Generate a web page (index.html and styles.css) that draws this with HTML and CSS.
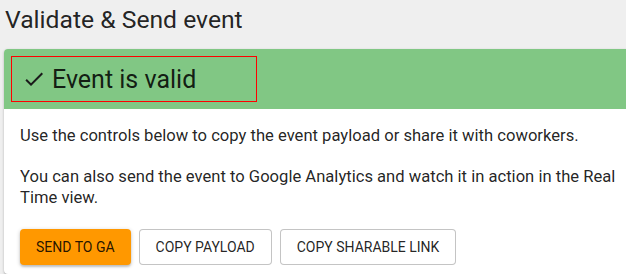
FILE: index.html
```html
<!DOCTYPE html>
<html>
  <head>
    <title>Validate &amp; Send event</title>
    <link rel="stylesheet" href="styles.css">
  </head>
  <body>
    <h1 class="page-title">Validate &amp; Send event</h1>

    <div class="card">
      <div class="card-status">
        <div class="status-title">
          <svg class="status-icon" viewBox="0 0 24 24" width="24" height="24">
            <path d="M9 16.17L4.83 12l-1.42 1.41L9 19 21 7l-1.41-1.41z"></path>
          </svg>
          <span>Event is valid</span>
        </div>
      </div>
      <div class="card-body">
        <p>Use the controls below to copy the event payload or share it with coworkers.</p>
        <p>You can also send the event to Google Analytics and watch it in action in the Real Time view.</p>
        <div class="actions">
          <button class="btn btn-primary">Send to GA</button>
          <button class="btn btn-outlined">Copy payload</button>
          <button class="btn btn-outlined">Copy sharable link</button>
        </div>
      </div>
    </div>
  </body>
</html>
```

FILE: styles.css
```css
html, body {
  overflow: hidden;
}
body {
  margin: 0;
  background-color: #efefef;
  font-family: Roboto, "Liberation Sans", sans-serif;
  color: rgba(0, 0, 0, 0.87);
}
.page-title {
  margin: 0;
  padding: 7px 5px 16px;
  font-size: 24.7px;
  font-weight: 400;
  line-height: 26px;
}
.card {
  margin: 0 -20px 0 4px;
  background-color: #fff;
  border-radius: 4px;
  box-shadow: 0 1px 3px rgba(0, 0, 0, 0.2), 0 1px 1px rgba(0, 0, 0, 0.14);
  overflow: hidden;
}
.card-status {
  padding: 7px;
  background-color: #81c784;
}
.status-title {
  display: flex;
  align-items: center;
  width: 234px;
  height: 44px;
  padding-left: 10px;
  border: 1px solid #ff0000;
  font-size: 25px;
}
.status-icon {
  margin-right: 6px;
  fill: #1b1b1b;
}
.card-body {
  padding: 16px 16px 9px;
  font-size: 16.6px;
  line-height: 21px;
}
.card-body p {
  margin: 0 0 20px 0;
}
.card-body p:last-of-type {
  margin-bottom: 21px;
}
.actions {
  display: flex;
  gap: 8px;
}
.btn {
  height: 36px;
  padding: 0 16px;
  border-radius: 4px;
  font-family: Roboto, "Liberation Sans", sans-serif;
  font-size: 14px;
  text-transform: uppercase;
  color: rgba(0, 0, 0, 0.87);
  cursor: pointer;
}
.btn-primary {
  border: none;
  background-color: #ff9800;
  box-shadow: 0 2px 2px rgba(0, 0, 0, 0.14), 0 1px 4px rgba(0, 0, 0, 0.2);
}
.btn-outlined {
  border: 1px solid rgba(0, 0, 0, 0.23);
  background-color: #fff;
}
```
